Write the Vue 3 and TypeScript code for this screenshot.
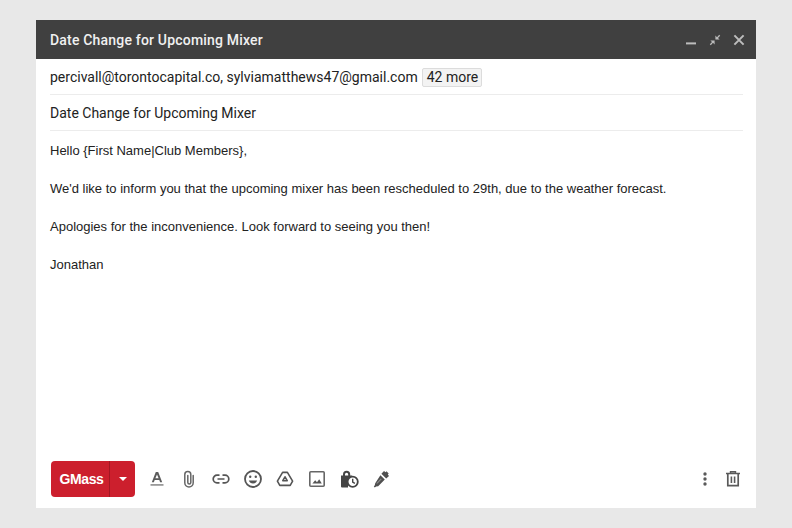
<script setup lang="ts">
const paragraphs: string[] = [
  "Hello {First Name|Club Members},",
  "We'd like to inform you that the upcoming mixer has been rescheduled to 29th, due to the weather forecast.",
  "Apologies for the inconvenience. Look forward to seeing you then!",
  "Jonathan",
];
</script>

<template>
  <div class="page">
    <section class="win">
      <header class="head">
        <span class="title">Date Change for Upcoming Mixer</span>
        <div class="win-ctl">
          <svg width="12" height="12" viewBox="0 0 12 12"><rect x="1" y="8.4" width="10" height="2" fill="#bdbdbd"/></svg>
          <svg width="12" height="12" viewBox="0 0 12 12" fill="#bdbdbd"><path d="M6.4 5.6V1.6L8 3.2 10.2.8l1 1L9 4l1.6 1.6zM5.6 6.4v4L4 8.8 1.8 11.2l-1-1L3 8 1.4 6.4z"/></svg>
          <svg width="12" height="12" viewBox="0 0 12 12"><path d="M1.4 1.4l9.2 9.2M10.6 1.4l-9.2 9.2" stroke="#bdbdbd" stroke-width="2"/></svg>
        </div>
      </header>
      <div class="main">
        <div class="row to">
          <span>percivall@torontocapital.co, sylviamatthews47@gmail.com</span>
          <span class="more">42 more</span>
        </div>
        <div class="row subject">Date Change for Upcoming Mixer</div>
        <div class="body">
          <p v-for="p in paragraphs" :key="p">{{ p }}</p>
        </div>
        <footer class="tools">
          <div class="send">
            <span class="send-l">GMass</span>
            <span class="send-r"><i class="caret"></i></span>
          </div>
          <div class="icons">
            <svg class="ic" viewBox="0 0 20 20" fill="#5c5c5c"><path d="M8.8 3h2.4l4 10.2h-2.1l-.8-2.3H7.7l-.8 2.3H4.8zm1.2 2.6L8.4 9.3h3.2z"/><rect x="3.5" y="15" width="13" height="1.8" fill="#999"/></svg>
            <svg class="ic" viewBox="0 0 20 20" fill="none" stroke="#666" stroke-width="1.5" stroke-linecap="round"><path d="M14.2 6.5v7.3a4.2 4.2 0 0 1-8.4 0V5.6a3 3 0 0 1 6 0v7.9a1.5 1.5 0 0 1-3 0V6.5"/></svg>
            <svg class="ic" viewBox="0 0 20 20" fill="none" stroke="#555" stroke-width="1.7"><path d="M8.5 6.2H6a3.8 3.8 0 0 0 0 7.6h2.5M11.5 6.2H14a3.8 3.8 0 0 1 0 7.6h-2.5M6.5 10h7"/></svg>
            <svg class="ic" viewBox="0 0 20 20" fill="none" stroke="#555" stroke-width="1.8"><circle cx="10" cy="10" r="8"/><circle cx="7.2" cy="7.8" r="1.2" fill="#555" stroke="none"/><circle cx="12.8" cy="7.8" r="1.2" fill="#555" stroke="none"/><path d="M5.8 11.6a4.5 4.5 0 0 0 8.4 0z" fill="#555" stroke="none"/></svg>
            <svg class="ic" viewBox="0 0 20 20" fill="none" stroke="#555" stroke-width="1.6" stroke-linejoin="round"><path d="M7.6 3.4h4.8l5.2 8.8-2.4 4.2H4.8l-2.4-4.2z"/><path d="M10 7.8l2.2 3.9H7.8z"/></svg>
            <svg class="ic" viewBox="0 0 20 20"><rect x="2.8" y="2.8" width="14.4" height="14.4" rx="1" fill="none" stroke="#666" stroke-width="1.6"/><path d="M5.4 14.6l2.8-3.4 1.8 2 2.2-3 2.6 4.4z" fill="#555"/></svg>
            <svg class="ic" viewBox="0 0 20 20"><path d="M5 7V5.4a2.6 2.6 0 0 1 5.2 0V7" fill="none" stroke="#444" stroke-width="2"/><path d="M2 6.4h11v6H9v6H3a1 1 0 0 1-1-1z" fill="#444"/><circle cx="13.7" cy="12.7" r="5.1" fill="#fff" stroke="#444" stroke-width="1.8"/><path d="M13.7 9.8v3.2l2.2 1.3" fill="none" stroke="#444" stroke-width="1.4"/></svg>
            <svg class="ic" viewBox="0 0 20 20" fill="#505050"><path d="M13 2l1.6 1.2.9-.9 2.2 2.2-.9.9 1.2 1.6-2.8 2.6-4.8-4.8z"/><path d="M9.4 6.2l4.4 4.4-6.6 6.6-2.1.4-1.3 1-1-1 1-1.3.4-2.1z"/><path d="M9.8 9.4l.9.9-4.2 4.2-1 .2.2-1z" fill="#8a8a8a"/></svg>
          </div>
          <div class="right">
            <svg class="ic" viewBox="0 0 20 20" fill="#5a5a5a"><circle cx="10" cy="5" r="1.7"/><circle cx="10" cy="10" r="1.7"/><circle cx="10" cy="15" r="1.7"/></svg>
            <svg class="ic" viewBox="0 0 20 20" fill="none" stroke="#5a5a5a"><path d="M3 4.5h14M7.5 4V2.8h5V4" stroke-width="1.4"/><path d="M4.8 4.8v11.9h10.4V4.8" stroke-width="1.7"/><path d="M8.4 7.5v6.6M11.6 7.5v6.6" stroke-width="1.6"/></svg>
          </div>
        </footer>
      </div>
    </section>
  </div>
</template>

<style scoped>
.page {
  width: 792px;
  height: 528px;
  background: #e8e8e8;
  padding: 20px 36px;
  box-sizing: border-box;
  font-family: Roboto, "Liberation Sans", sans-serif;
}
.win {
  width: 720px;
  height: 488px;
  background: #fff;
  display: flex;
  flex-direction: column;
}
.head {
  height: 39px;
  background: #404040;
  display: flex;
  align-items: center;
  justify-content: space-between;
  padding: 0 11px 0 14px;
  flex: none;
}
.title {
  color: #f0f0f0;
  font-size: 14px;
  font-weight: 500;
  letter-spacing: 0.19px;
}
.win-ctl {
  display: flex;
  gap: 12px;
  align-items: center;
}
.main {
  flex: 1;
  display: flex;
  flex-direction: column;
  padding: 0 13px 0 14px;
  min-height: 0;
}
.row {
  font-size: 14px;
  color: #222;
  border-bottom: 1px solid #ececec;
  display: flex;
  align-items: center;
  flex: none;
}
.to {
  height: 35px;
  gap: 4px;
}
.subject {
  height: 35px;
}
.more {
  line-height: 17px;
  height: 17px;
  padding: 0 3px 0 4px;
  background: #f3f3f3;
  border: 1px solid #dcdcdc;
  border-radius: 2px;
  margin-top: 1px;
}
.body {
  flex: 1;
  padding-top: 11px;
  font-family: "Liberation Sans", Arial, sans-serif;
  font-size: 13px;
  color: #222;
}
.body p {
  margin: 0 0 20px;
  line-height: 18px;
}
.tools {
  flex: none;
  height: 36px;
  margin-bottom: 11px;
  padding-left: 1px;
  display: flex;
  align-items: center;
}
.send {
  width: 84px;
  height: 36px;
  display: flex;
  background: #cc1f2d;
  border-radius: 4px;
  color: #fff;
  font-size: 14px;
  font-weight: 700;
  font-family: "Liberation Sans", Arial, sans-serif;
}
.send-l {
  width: 59px;
  box-sizing: border-box;
  padding-left: 3px;
  display: flex;
  align-items: center;
  justify-content: center;
  letter-spacing: -0.4px;
  border-right: 1px solid #a31622;
}
.send-r {
  flex: 1;
  display: flex;
  align-items: center;
  justify-content: center;
}
.caret {
  width: 0;
  height: 0;
  border: 4px solid transparent;
  border-top: 4px solid #fff;
  border-bottom: 0;
}
.icons {
  display: flex;
  gap: 12px;
  margin-left: 12px;
}
.ic {
  width: 20px;
  height: 20px;
  display: block;
}
.right {
  margin-left: auto;
  display: flex;
  gap: 8px;
}
</style>

<style>
body { margin: 0; }
</style>
